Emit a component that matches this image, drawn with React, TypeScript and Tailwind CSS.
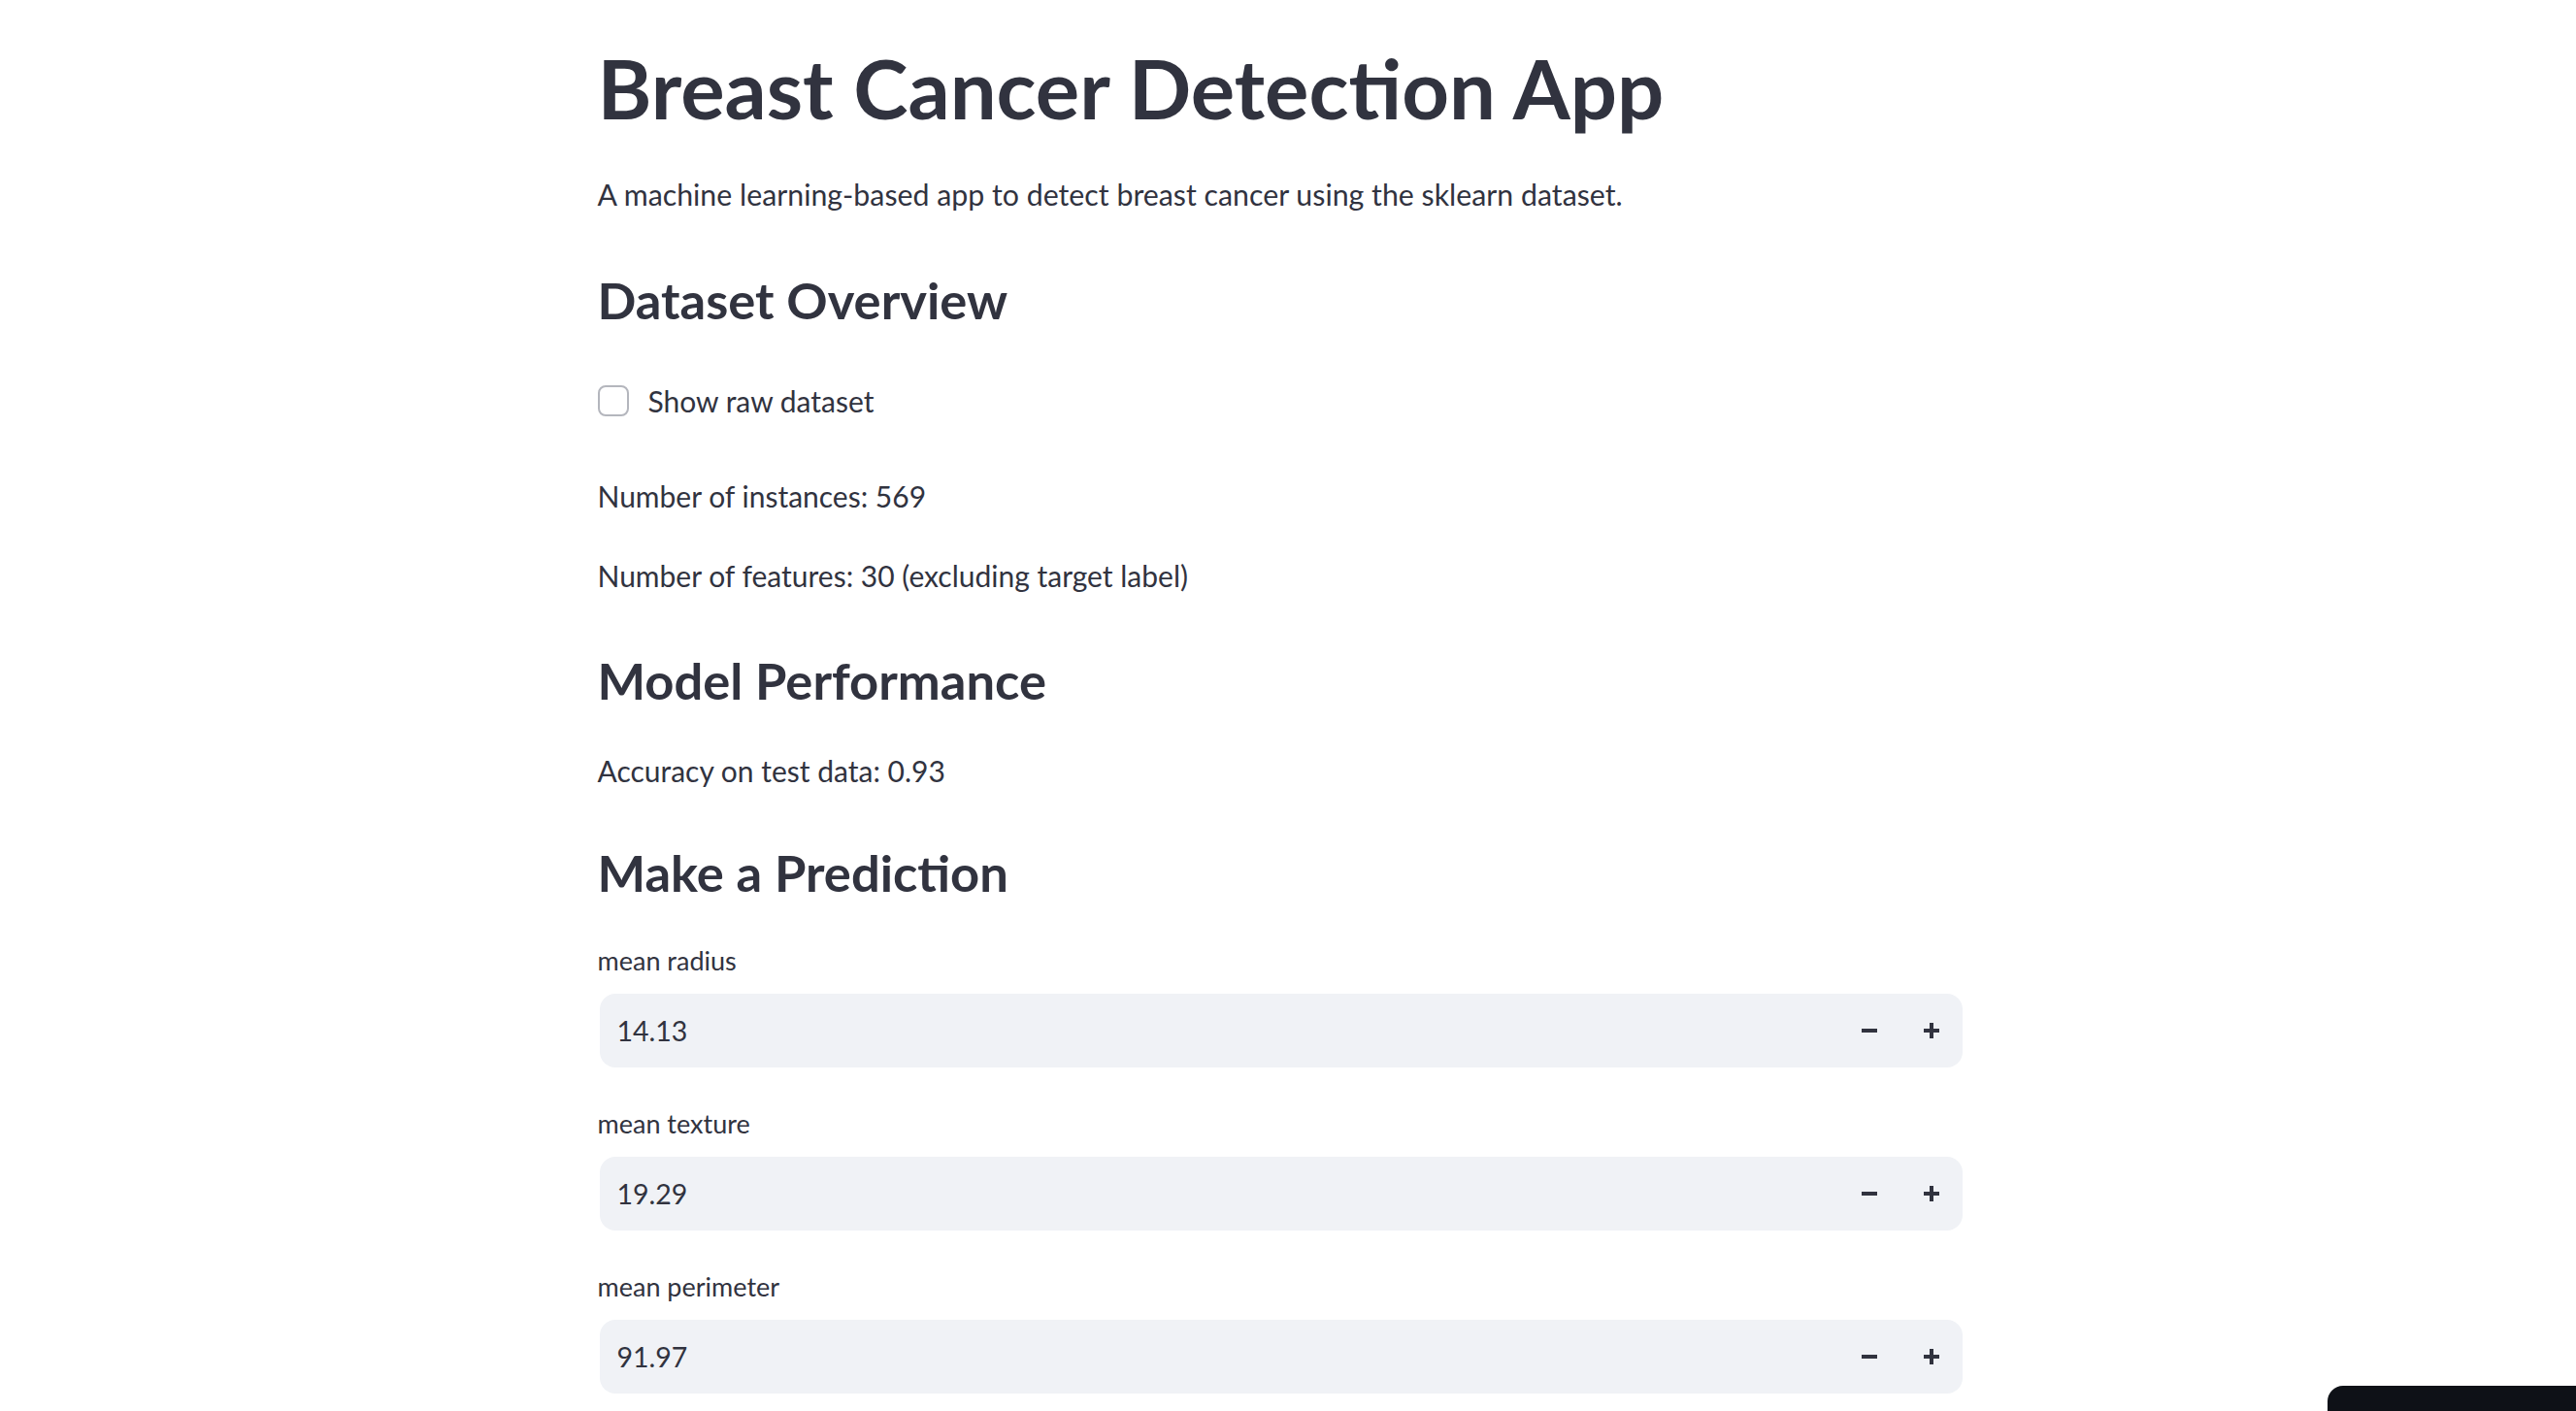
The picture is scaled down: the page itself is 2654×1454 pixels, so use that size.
import React from "react";

const font = { fontFamily: 'Lato, "Noto Sans", sans-serif' };

function Minus() {
  return (
    <svg width="16" height="16" viewBox="0 0 16 16" fill="#31333f">
      <rect x="0" y="6" width="16" height="4" />
    </svg>
  );
}

function Plus() {
  return (
    <svg width="16" height="16" viewBox="0 0 16 16" fill="#31333f">
      <rect x="0" y="6" width="16" height="4" />
      <rect x="6" y="0" width="4" height="16" />
    </svg>
  );
}

function NumberInput({ label, value, first }: { label: string; value: string; first?: boolean }) {
  return (
    <div className={first ? "mt-[39px]" : "mt-[38px]"}>
      <div className="h-[40px] text-[27px] leading-[40px] text-[#31333f]">{label}</div>
      <div className="mx-[2px] mt-[14px] flex h-[76px] items-center rounded-[16px] bg-[#f0f2f6]">
        <div className="flex-1 pl-[18px] text-[28.5px] text-[#31333f]">{value}</div>
        <button className="flex h-full w-[64px] items-center justify-center">
          <Minus />
        </button>
        <button className="flex h-full w-[64px] items-center justify-center">
          <Plus />
        </button>
      </div>
    </div>
  );
}

export default function App() {
  return (
    <div className="relative h-[1454px] overflow-hidden bg-white pr-[15px]" style={font}>
      <div className="mx-auto w-[1408px] pt-[38px] text-[#31333f]">
        {/* Title */}
        <h1 className="h-[104px] text-[85px] font-bold leading-[104px]">Breast Cancer Detection App</h1>
        <p className="mt-[34px] h-[48px] text-[30.3px] leading-[48px]">
          A machine learning-based app to detect breast cancer using the sklearn dataset.
        </p>

        {/* Dataset */}
        <h3 className="mt-[53px] h-[64px] text-[52.5px] font-bold leading-[64px]">Dataset Overview</h3>
        <label className="mt-[48px] flex h-[48px] items-center">
          <span className="h-[32px] w-[32px] rounded-[8px] border-2 border-[#b4b6bd] bg-white" />
          <span className="ml-[20px] text-[30px] leading-[48px]">Show raw dataset</span>
        </label>
        <p className="mt-[50px] h-[48px] text-[30px] leading-[48px]">Number of instances: 569</p>
        <p className="mt-[34px] h-[48px] text-[30px] leading-[48px]">
          Number of features: 30 (excluding target label)
        </p>

        {/* Model */}
        <h3 className="mt-[52px] h-[64px] text-[52.5px] font-bold leading-[64px]">Model Performance</h3>
        <p className="mt-[37px] h-[48px] text-[30px] leading-[48px]">Accuracy on test data: 0.93</p>

        {/* Prediction */}
        <h3 className="mt-[49px] h-[64px] text-[52.5px] font-bold leading-[64px]">Make a Prediction</h3>
        <NumberInput label="mean radius" value="14.13" first />
        <NumberInput label="mean texture" value="19.29" />
        <NumberInput label="mean perimeter" value="91.97" />
      </div>

      {/* manage app button peeking in */}
      <div className="absolute bottom-0 right-0 h-[26px] w-[256px] rounded-tl-[16px] bg-[#0e1117]" />
    </div>
  );
}
